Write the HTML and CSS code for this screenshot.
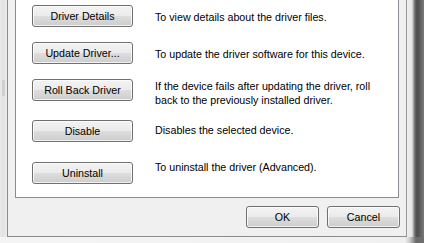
FILE: index.html
```html
<!DOCTYPE html>
<html>
<head>
<meta charset="utf-8">
<link rel="stylesheet" href="styles.css">
</head>
<body>
<div class="window">
  <div class="top">
    <div class="frame-left"><div class="grip"></div></div>
    <div class="dialog">
      <div class="panel">
        <div class="row">
          <button class="btn wide">Driver Details</button>
          <div class="desc d-mid">To view details about the driver files.</div>
        </div>
        <div class="row">
          <button class="btn wide">Update Driver...</button>
          <div class="desc d-mid">To update the driver software for this device.</div>
        </div>
        <div class="row">
          <button class="btn wide">Roll Back Driver</button>
          <div class="desc d-top">If the device fails after updating the driver, roll<br>back to the previously installed driver.</div>
        </div>
        <div class="row row-sp">
          <button class="btn wide">Disable</button>
          <div class="desc d-dis">Disables the selected device.</div>
        </div>
        <div class="row row-sp2">
          <button class="btn wide">Uninstall</button>
          <div class="desc d-up">To uninstall the driver (Advanced).</div>
        </div>
      </div>
      <div class="footer">
        <button class="btn small">OK</button>
        <button class="btn small">Cancel</button>
      </div>
    </div>
    <div class="frame-right"></div>
  </div>
  <div class="bottom"></div>
</div>
</body>
</html>
```

FILE: styles.css
```css
* { box-sizing: border-box; }
html, body { margin: 0; padding: 0; }
body {
  width: 424px;
  height: 243px;
  overflow: hidden;
  background: #f2f2f2;
  font-family: "Liberation Sans", Arial, sans-serif;
  font-size: 10.7px;
  color: #000;
}
.window { display: flex; flex-direction: column; width: 424px; height: 243px; }
.top { display: flex; height: 237px; }
.frame-left {
  width: 7px;
  background: linear-gradient(to right, #eaeaea, #e2e2e2 40%, #ececec);
  display: flex;
  flex-direction: column;
}
.grip {
  margin-top: 80px;
  margin-left: 2px;
  width: 3px;
  height: 16px;
  background: #d0d0d0;
}
.dialog {
  width: 400px;
  background: #f0f0f0;
  border-left: 1px solid #8c8c8c;
  border-right: 1px solid #9a9a9a;
  border-bottom: 1px solid #8c8c8c;
  display: flex;
  flex-direction: column;
}
.frame-right {
  width: 17px;
  background: linear-gradient(to right, #eeeeee 0, #e6e6e6 5px, #b8b8b8 6px, #6a6a6a 8px, #4c4c4c 10px, #5e5e5e 13px, #7a7a7a 17px);
}
.bottom {
  height: 6px;
  background: linear-gradient(to right, #f4f4f4 0, #f0f0f0 405px, #c8c8c8 410px, #6a6a6a 416px, #707070 424px);
}
.panel {
  margin: 0 7px;
  height: 198px;
  background: #fff;
  border: 1px solid #898c95;
  border-top: none;
  padding: 5px 0 0 16px;
  display: flex;
  flex-direction: column;
  gap: 15px;
}
.row { display: flex; align-items: flex-start; height: 22px; gap: 22px; }
.row-sp { margin-top: 4px; }
.row-sp2 { margin-top: 5px; }
.btn {
  font-family: "Liberation Sans", Arial, sans-serif;
  font-size: 10.7px;
  color: #000;
  height: 22px;
  padding: 0;
  border: 1px solid #707070;
  border-radius: 3px;
  background: linear-gradient(to bottom, #f3f3f3 0%, #ebebeb 48%, #dddddd 52%, #cdcdcd 100%);
  box-shadow: inset 0 0 0 1px rgba(255,255,255,0.75);
  line-height: 20px;
  text-align: center;
  flex: none;
}
.wide { width: 101px; }
.small { width: 73px; }
.desc { line-height: 14px; white-space: nowrap; }
.d-mid { padding-top: 5px; }
.d-top { padding-top: 0; }
.d-dis { padding-top: 3px; }
.d-up { margin-top: -2px; }
.footer {
  display: flex;
  justify-content: flex-end;
  gap: 8px;
  padding: 8px 6px 0 0;
}
```
